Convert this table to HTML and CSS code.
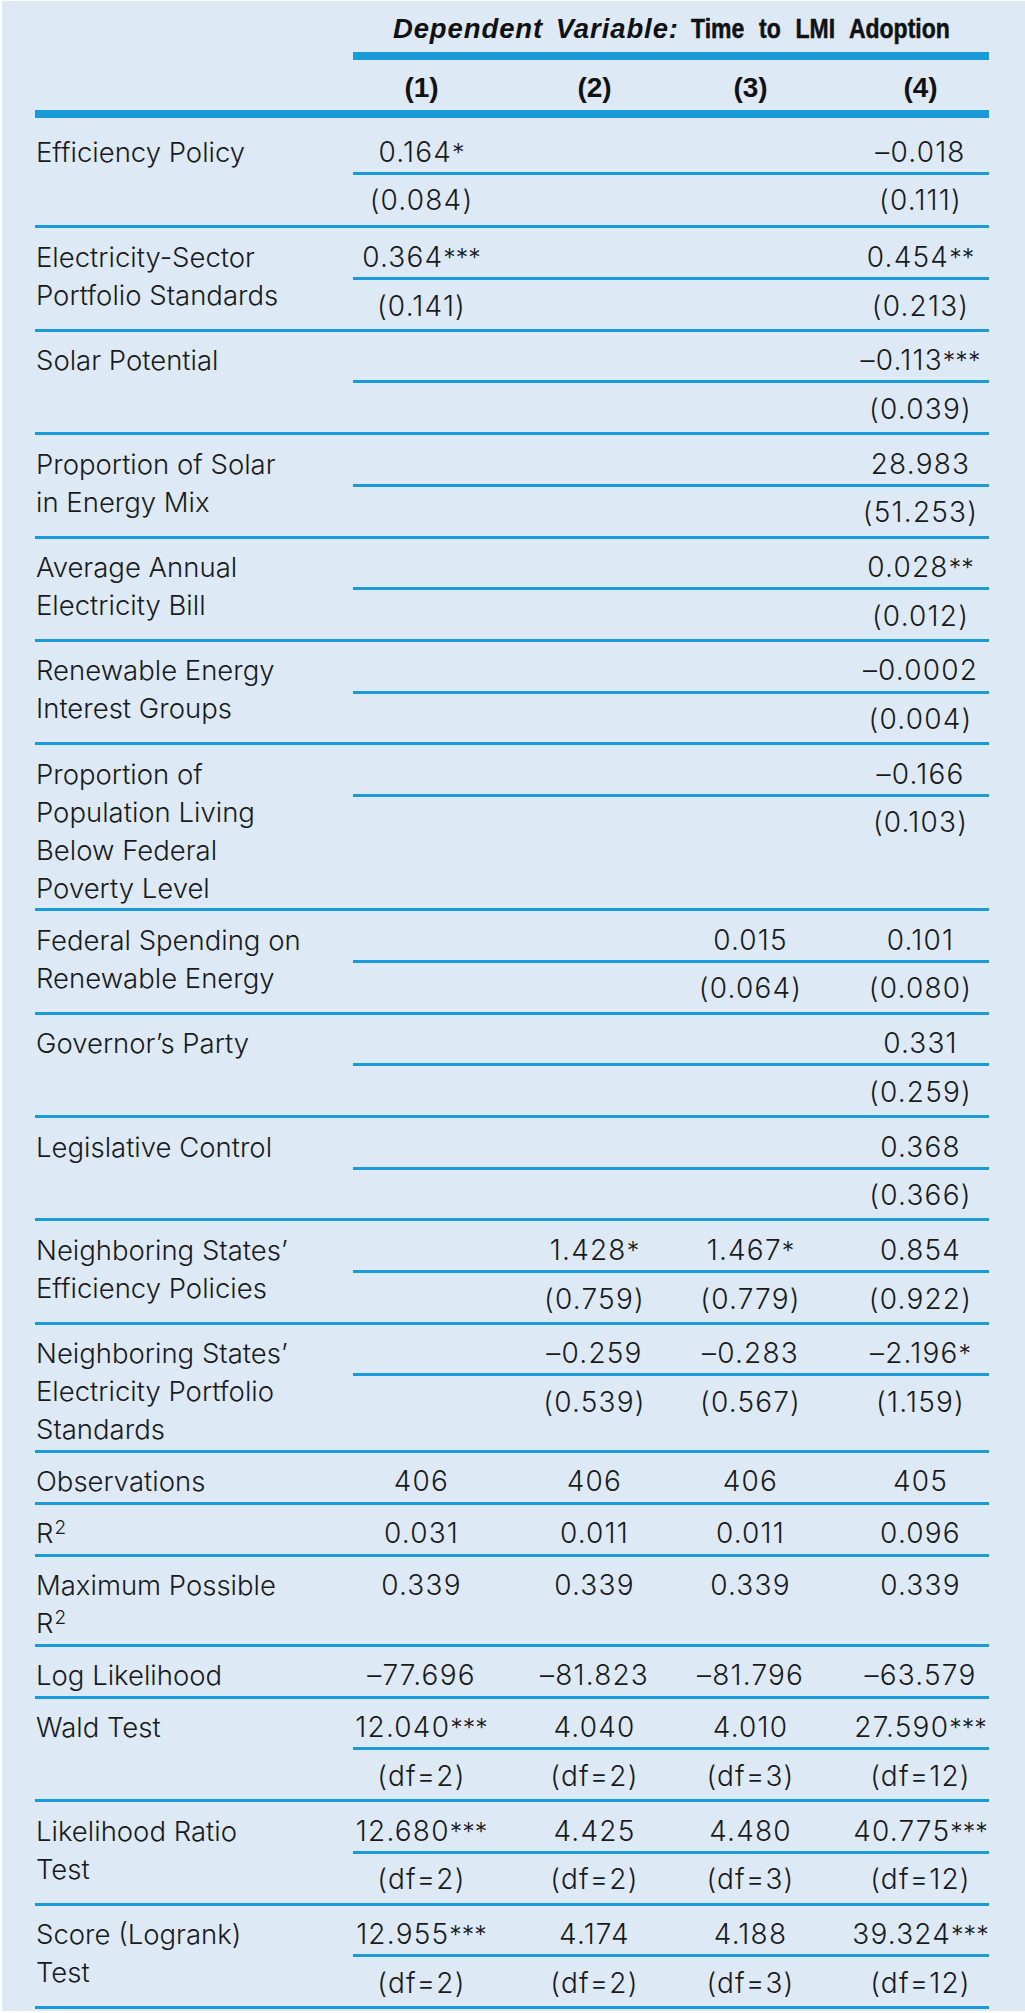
FILE: index.html
```html
<!DOCTYPE html>
<html lang="en">
<head>
<meta charset="utf-8">
<title>Time to LMI Adoption</title>
<link rel="stylesheet" href="styles.css">
</head>
<body>
<div class="panel">
  <div class="tbl">
    <div class="title-row">
      <div class="title"><em class="title-em">Dependent Variable:</em> <span class="title-main">Time to LMI Adoption</span></div>
    </div>
    <div class="head-row">
      <div class="head-spacer"></div>
      <div class="cols">
        <span class="c">(1)</span><span class="c">(2)</span><span class="c">(3)</span><span class="c">(4)</span>
      </div>
    </div>

    <div class="block first">
      <div class="label">Efficiency Policy</div>
      <div class="data">
        <div class="cols coef"><span class="c">0.164<i class="st">*</i></span><span class="c"></span><span class="c"></span><span class="c">–0.018</span></div>
        <div class="cols se"><span class="c">(0.084)</span><span class="c"></span><span class="c"></span><span class="c">(0.111)</span></div>
      </div>
    </div>

    <div class="block">
      <div class="label">Electricity-Sector<br>Portfolio Standards</div>
      <div class="data">
        <div class="cols coef"><span class="c">0.364<i class="st">***</i></span><span class="c"></span><span class="c"></span><span class="c">0.454<i class="st">**</i></span></div>
        <div class="cols se"><span class="c">(0.141)</span><span class="c"></span><span class="c"></span><span class="c">(0.213)</span></div>
      </div>
    </div>

    <div class="block">
      <div class="label">Solar Potential</div>
      <div class="data">
        <div class="cols coef"><span class="c"></span><span class="c"></span><span class="c"></span><span class="c">–0.113<i class="st">***</i></span></div>
        <div class="cols se"><span class="c"></span><span class="c"></span><span class="c"></span><span class="c">(0.039)</span></div>
      </div>
    </div>

    <div class="block">
      <div class="label">Proportion of Solar<br>in Energy Mix</div>
      <div class="data">
        <div class="cols coef"><span class="c"></span><span class="c"></span><span class="c"></span><span class="c">28.983</span></div>
        <div class="cols se"><span class="c"></span><span class="c"></span><span class="c"></span><span class="c">(51.253)</span></div>
      </div>
    </div>

    <div class="block">
      <div class="label">Average Annual<br>Electricity Bill</div>
      <div class="data">
        <div class="cols coef"><span class="c"></span><span class="c"></span><span class="c"></span><span class="c">0.028<i class="st">**</i></span></div>
        <div class="cols se"><span class="c"></span><span class="c"></span><span class="c"></span><span class="c">(0.012)</span></div>
      </div>
    </div>

    <div class="block">
      <div class="label">Renewable Energy<br>Interest Groups</div>
      <div class="data">
        <div class="cols coef"><span class="c"></span><span class="c"></span><span class="c"></span><span class="c">–0.0002</span></div>
        <div class="cols se"><span class="c"></span><span class="c"></span><span class="c"></span><span class="c">(0.004)</span></div>
      </div>
    </div>

    <div class="block">
      <div class="label">Proportion of<br>Population Living<br>Below Federal<br>Poverty Level</div>
      <div class="data">
        <div class="cols coef"><span class="c"></span><span class="c"></span><span class="c"></span><span class="c">–0.166</span></div>
        <div class="cols se"><span class="c"></span><span class="c"></span><span class="c"></span><span class="c">(0.103)</span></div>
      </div>
    </div>

    <div class="block">
      <div class="label">Federal Spending on<br>Renewable Energy</div>
      <div class="data">
        <div class="cols coef"><span class="c"></span><span class="c"></span><span class="c">0.015</span><span class="c">0.101</span></div>
        <div class="cols se"><span class="c"></span><span class="c"></span><span class="c">(0.064)</span><span class="c">(0.080)</span></div>
      </div>
    </div>

    <div class="block">
      <div class="label">Governor’s Party</div>
      <div class="data">
        <div class="cols coef"><span class="c"></span><span class="c"></span><span class="c"></span><span class="c">0.331</span></div>
        <div class="cols se"><span class="c"></span><span class="c"></span><span class="c"></span><span class="c">(0.259)</span></div>
      </div>
    </div>

    <div class="block">
      <div class="label">Legislative Control</div>
      <div class="data">
        <div class="cols coef"><span class="c"></span><span class="c"></span><span class="c"></span><span class="c">0.368</span></div>
        <div class="cols se"><span class="c"></span><span class="c"></span><span class="c"></span><span class="c">(0.366)</span></div>
      </div>
    </div>

    <div class="block">
      <div class="label">Neighboring States’<br>Efficiency Policies</div>
      <div class="data">
        <div class="cols coef"><span class="c"></span><span class="c">1.428<i class="st">*</i></span><span class="c">1.467<i class="st">*</i></span><span class="c">0.854</span></div>
        <div class="cols se"><span class="c"></span><span class="c">(0.759)</span><span class="c">(0.779)</span><span class="c">(0.922)</span></div>
      </div>
    </div>

    <div class="block">
      <div class="label">Neighboring States’<br>Electricity Portfolio<br>Standards</div>
      <div class="data">
        <div class="cols coef"><span class="c"></span><span class="c">–0.259</span><span class="c">–0.283</span><span class="c">–2.196<i class="st">*</i></span></div>
        <div class="cols se"><span class="c"></span><span class="c">(0.539)</span><span class="c">(0.567)</span><span class="c">(1.159)</span></div>
      </div>
    </div>

    <div class="block single">
      <div class="label">Observations</div>
      <div class="data">
        <div class="cols row"><span class="c">406</span><span class="c">406</span><span class="c">406</span><span class="c">405</span></div>
      </div>
    </div>

    <div class="block single">
      <div class="label">R<sup class="sq">2</sup></div>
      <div class="data">
        <div class="cols row"><span class="c">0.031</span><span class="c">0.011</span><span class="c">0.011</span><span class="c">0.096</span></div>
      </div>
    </div>

    <div class="block single">
      <div class="label">Maximum Possible<br>R<sup class="sq">2</sup></div>
      <div class="data">
        <div class="cols row"><span class="c">0.339</span><span class="c">0.339</span><span class="c">0.339</span><span class="c">0.339</span></div>
      </div>
    </div>

    <div class="block single">
      <div class="label">Log Likelihood</div>
      <div class="data">
        <div class="cols row"><span class="c">–77.696</span><span class="c">–81.823</span><span class="c">–81.796</span><span class="c">–63.579</span></div>
      </div>
    </div>

    <div class="block">
      <div class="label">Wald Test</div>
      <div class="data">
        <div class="cols coef"><span class="c">12.040<i class="st">***</i></span><span class="c">4.040</span><span class="c">4.010</span><span class="c">27.590<i class="st">***</i></span></div>
        <div class="cols se"><span class="c">(df=2)</span><span class="c">(df=2)</span><span class="c">(df=3)</span><span class="c">(df=12)</span></div>
      </div>
    </div>

    <div class="block">
      <div class="label">Likelihood Ratio<br>Test</div>
      <div class="data">
        <div class="cols coef"><span class="c">12.680<i class="st">***</i></span><span class="c">4.425</span><span class="c">4.480</span><span class="c">40.775<i class="st">***</i></span></div>
        <div class="cols se"><span class="c">(df=2)</span><span class="c">(df=2)</span><span class="c">(df=3)</span><span class="c">(df=12)</span></div>
      </div>
    </div>

    <div class="block">
      <div class="label">Score (Logrank)<br>Test</div>
      <div class="data">
        <div class="cols coef"><span class="c">12.955<i class="st">***</i></span><span class="c">4.174</span><span class="c">4.188</span><span class="c">39.324<i class="st">***</i></span></div>
        <div class="cols se"><span class="c">(df=2)</span><span class="c">(df=2)</span><span class="c">(df=3)</span><span class="c">(df=12)</span></div>
      </div>
    </div>
  </div>
</div>
</body>
</html>
```

FILE: styles.css
```css
html, body {
  margin: 0;
  padding: 0;
  background: #ffffff;
}

.panel {
  margin: 1px 0 0 2px;
  padding: 0 0 2px 33px;
  background: #dde9f5;
  color: #1a1a1a;
  font-family: Inter, "Noto Sans", sans-serif;
  font-size: 27.5px;
  font-weight: 350;
}

.tbl {
  width: 954px;
}

/* header */
.title-row {
  margin-left: 318px;
  padding: 13px 0 8px;
  line-height: 30px;
  border-bottom: 8px solid #1a9ad6;
  display: flex;
  justify-content: center;
}

.title {
  font-family: "Liberation Sans", Arial, sans-serif;
  font-weight: 700;
  font-size: 27.5px;
  color: #111;
  white-space: nowrap;
  word-spacing: 4px;
}

.title-em {
  font-style: italic;
  letter-spacing: 0.9px;
}

.title-main {
  display: inline-block;
  word-spacing: 10px;
  transform: scaleX(0.836);
  transform-origin: 0 50%;
  margin-right: -51px;
  -webkit-text-stroke: 0.5px #111;
}

.head-row {
  display: flex;
  padding: 13px 0 7px;
  line-height: 30px;
  border-bottom: 8px solid #1a9ad6;
}

.head-row .c {
  font-family: "Liberation Sans", Arial, sans-serif;
  font-weight: 700;
  font-size: 28px;
  color: #111;
  letter-spacing: 0;
}

.head-spacer {
  width: 318px;
  flex: none;
}

.cols {
  display: grid;
  grid-template-columns: 187px 159px 153px 137px;
  width: 636px;
}

.c {
  display: flex;
  justify-content: center;
  align-items: baseline;
  white-space: nowrap;
  padding-right: 50px;
  font-size: 28px;
  letter-spacing: 1.2px;
}

.c:nth-child(4) {
  padding-right: 0;
}

/* body rows */
.block {
  display: flex;
  border-bottom: 3px solid #1a9ad6;
}

.block.first {
  padding-top: 5px;
}

.label {
  width: 318px;
  flex: none;
  padding: 9.5px 0 1.5px 1px;
  line-height: 38px;
  box-sizing: border-box;
}

.data {
  display: flex;
  flex-direction: column;
  flex: 1;
}

.coef {
  padding: 9.5px 0 1.2px;
  line-height: 38px;
  border-bottom: 3px solid #1a9ad6;
}

.se {
  flex: 1;
  padding: 6.5px 0 4.2px;
  line-height: 38px;
  align-content: start;
}

.block.first .se {
  padding-bottom: 6.2px;
}

.row {
  padding: 9.5px 0 1.2px;
  line-height: 38px;
}

.st {
  font-style: normal;
  font-size: 25px;
  font-weight: 300;
  letter-spacing: 0;
  line-height: 28px;
}

.sq {
  font-size: 19px;
  line-height: 0;
  vertical-align: 9px;
  margin-left: 1px;
}
```
